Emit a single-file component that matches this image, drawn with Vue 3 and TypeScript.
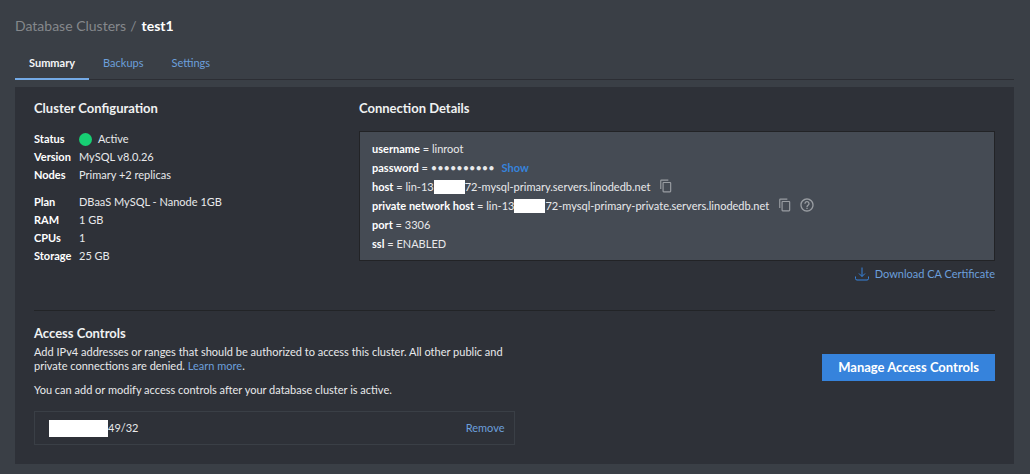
<script setup lang="ts">
import { ref } from 'vue'

interface Row {
  label: string
  value: string
  status?: boolean
}

const crumb = 'Database Clusters'
const clusterName = 'test1'
const tabs = ['Summary', 'Backups', 'Settings']
const activeTab = ref('Summary')

const configGroups: Row[][] = [
  [
    { label: 'Status', value: 'Active', status: true },
    { label: 'Version', value: 'MySQL v8.0.26' },
    { label: 'Nodes', value: 'Primary +2 replicas' },
  ],
  [
    { label: 'Plan', value: 'DBaaS MySQL - Nanode 1GB' },
    { label: 'RAM', value: '1 GB' },
    { label: 'CPUs', value: '1' },
    { label: 'Storage', value: '25 GB' },
  ],
]
</script>

<template>
  <div class="page">
    <header class="crumbs">
      <a href="#" class="crumb">{{ crumb }}</a><span class="slash">/</span>
      <h1>{{ clusterName }}</h1>
    </header>

    <nav class="tabs" role="tablist">
      <button
        v-for="tab in tabs"
        :key="tab"
        type="button"
        role="tab"
        class="tab"
        :class="{ active: tab === activeTab }"
        :aria-selected="tab === activeTab"
        @click="activeTab = tab"
      >{{ tab }}</button>
    </nav>

    <main class="panel">
      <div class="columns">
        <section>
          <h2>Cluster Configuration</h2>
          <dl v-for="(group, i) in configGroups" :key="i" class="config">
            <div v-for="row in group" :key="row.label" class="config-row">
              <dt>{{ row.label }}</dt>
              <dd><span v-if="row.status" class="dot"></span>{{ row.value }}</dd>
            </div>
          </dl>
        </section>

        <section>
          <h2>Connection Details</h2>
          <div class="details">
            <div class="line"><b>username</b>&nbsp;= linroot</div>
            <div class="line">
              <b>password</b>&nbsp;=&nbsp;<span class="mask">••••••••••</span>
              <button type="button" class="link show">Show</button>
            </div>
            <div class="line">
              <b>host</b>&nbsp;= lin-13<span class="redact host"></span>72-mysql-primary.servers.linodedb.net
              <button type="button" class="icon" aria-label="Copy host">
                <svg viewBox="0 0 24 24" fill="currentColor"><path d="M16 1H4a2 2 0 0 0-2 2v14h2V3h12V1zm3 4H8a2 2 0 0 0-2 2v14a2 2 0 0 0 2 2h11a2 2 0 0 0 2-2V7a2 2 0 0 0-2-2zm0 16H8V7h11v14z" /></svg>
              </button>
            </div>
            <div class="line">
              <b>private network host</b>&nbsp;= lin-13<span class="redact host"></span>72-mysql-primary-private.servers.linodedb.net
              <button type="button" class="icon" aria-label="Copy private network host">
                <svg viewBox="0 0 24 24" fill="currentColor"><path d="M16 1H4a2 2 0 0 0-2 2v14h2V3h12V1zm3 4H8a2 2 0 0 0-2 2v14a2 2 0 0 0 2 2h11a2 2 0 0 0 2-2V7a2 2 0 0 0-2-2zm0 16H8V7h11v14z" /></svg>
              </button>
              <button type="button" class="icon help" aria-label="Help">
                <svg viewBox="0 0 24 24" fill="currentColor"><path d="M11 18h2v-2h-2v2zm1-16C6.48 2 2 6.48 2 12s4.480 10 10 10 10-4.480 10-10S17.520 2 12 2zm0 18c-4.410 0-8-3.590-8-8s3.590-8 8-8 8 3.590 8 8-3.590 8-8 8zm0-14c-2.210 0-4 1.790-4 4h2c0-1.100.9-2 2-2s2 .9 2 2c0 2-3 1.750-3 5h2c0-2.250 3-2.500 3-5 0-2.210-1.790-4-4-4z" /></svg>
              </button>
            </div>
            <div class="line"><b>port</b>&nbsp;= 3306</div>
            <div class="line"><b>ssl</b>&nbsp;= ENABLED</div>
          </div>
          <div class="download">
            <button type="button" class="link">
              <svg viewBox="0 0 14 14" fill="none" stroke="currentColor"><path d="M.5 9.500V11.500Q.5 13 2 13H12Q13.500 13 13.500 11.500V9.500M7 .5V9.500M4 6.500L7 9.500L10 6.500" /></svg>
              Download CA Certificate
            </button>
          </div>
        </section>
      </div>

      <hr />

      <section class="access">
        <div class="access-main">
          <h2>Access Controls</h2>
          <p>
            Add IPv4 addresses or ranges that should be authorized to access this
            cluster. All other public and private connections are denied.
            <a href="#">Learn more</a>.
          </p>
          <p>You can add or modify access controls after your database cluster is active.</p>
          <div class="address">
            <span class="ip"><span class="redact addr"></span>49/32</span>
            <button type="button" class="link">Remove</button>
          </div>
        </div>
        <button type="button" class="primary">Manage Access Controls</button>
      </section>
    </main>
  </div>
</template>

<style>
body {
  margin: 0;
  background: #3a3f46;
}
</style>

<style scoped>
.page {
  box-sizing: border-box;
  min-height: 100vh;
  padding: 16px 16px 11px 15px;
  background: #3a3f46;
  color: #e8e9eb;
  font: 11px/14px Lato, "Open Sans", sans-serif;
}
button {
  padding: 0;
  border: 0;
  background: none;
  color: inherit;
  font: inherit;
  cursor: pointer;
}
a {
  color: #6c9fdb;
  text-decoration: none;
}
h1,
h2,
p,
dl,
dd {
  margin: 0;
}
.crumbs {
  display: flex;
  font-size: 14px;
  line-height: 20px;
}
.crumb,
.slash {
  color: #85888c;
}
.slash {
  margin: 0 5px 0 4px;
}
h1 {
  color: #fff;
  font-size: 14px;
  line-height: 20px;
}
.tabs {
  display: flex;
  margin-top: 11px;
  box-shadow: inset 0 -1px #2c2e34;
}
.tab {
  padding: 9px 14px 8px;
  border-bottom: 2px solid transparent;
  color: #6c9fdb;
}
.tab.active {
  border-color: #74aae6;
  color: #f4f5f6;
  font-weight: 700;
}
.panel {
  margin-top: 7px;
  padding: 13px 19px 19px;
  background: #2e3138;
}
.columns {
  display: grid;
  grid-template-columns: 325fr 636fr;
}
h2 {
  color: #f0f1f2;
  font-size: 13px;
  line-height: 16px;
}
.config {
  margin-top: 14px;
}
.config + .config {
  margin-top: 9px;
}
.config-row {
  display: flex;
  line-height: 18px;
}
dt {
  width: 45px;
  color: #fff;
  font-weight: 700;
}
dd {
  display: flex;
  align-items: center;
}
.dot {
  width: 13px;
  height: 13px;
  margin-right: 6px;
  border-radius: 50%;
  background: #17cf73;
}
.details {
  margin-top: 15px;
  padding: 7px 12px;
  border: 1px solid #222326;
  background: #454b54;
}
.line {
  display: flex;
  align-items: center;
  height: 19px;
  white-space: nowrap;
}
.line b {
  color: #fff;
}
.link {
  color: #6c9fdb;
}
.show {
  margin-left: 7px;
  color: #3683dc;
  font-weight: 700;
}
.redact {
  background: #fff;
}
.host {
  width: 31px;
  height: 14px;
}
.icon {
  display: flex;
  margin: 0 0 2px 9px;
  color: #999da2;
}
.icon svg {
  width: 14px;
  height: 14px;
}
.help {
  margin-left: 7px;
}
.help svg {
  width: 16px;
  height: 16px;
}
.download {
  display: flex;
  justify-content: flex-end;
  margin-top: 5px;
}
.download .link {
  display: flex;
  align-items: center;
  gap: 6px;
  line-height: 16px;
}
.download svg {
  width: 14px;
  height: 14px;
  color: #3683dc;
}
hr {
  height: 1px;
  margin: 28px 0 14px;
  border: 0;
  background: #222427;
}
.access {
  display: flex;
  align-items: flex-start;
  justify-content: space-between;
}
.access-main {
  width: 50%;
}
.access p {
  margin-top: 4px;
}
.access p + p {
  margin-top: 10px;
}
.address {
  display: flex;
  align-items: center;
  justify-content: space-between;
  margin-top: 14px;
  padding: 7px 9px 7px 14px;
  border: 1px solid #3a3f46;
  line-height: 18px;
}
.ip {
  display: flex;
  align-items: center;
}
.addr {
  width: 59px;
  height: 17px;
}
.primary {
  margin-top: 29px;
  padding: 5px 16px 6px;
  background: #3683dc;
  color: #fff;
  font-size: 13px;
  font-weight: 700;
  line-height: 16px;
}
</style>
